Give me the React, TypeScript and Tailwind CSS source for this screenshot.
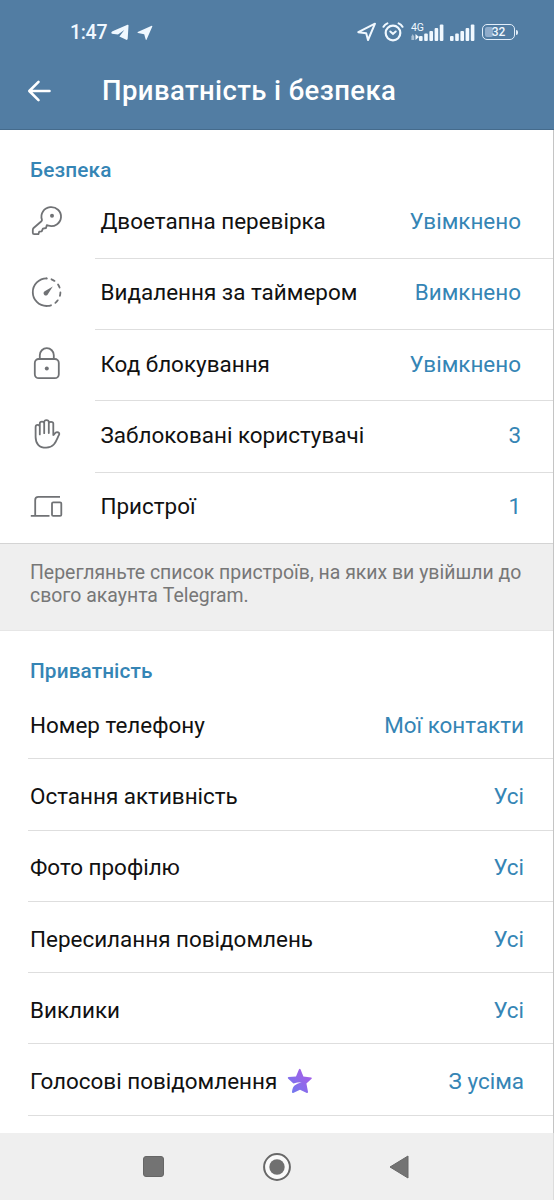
import React from "react";

const KeyIcon = () => (
  <svg width="34" height="34" viewBox="0 0 34 34" fill="none" stroke="#707275" strokeWidth="1.8" strokeLinejoin="round" strokeLinecap="round">
    <path d="M11.9 14.5A9.8 9.5 0 1 1 18.5 20.7L16.8 20.2L16 23L12.9 23.6L11.7 26.4L9.2 26.7L8.4 29.2H4.2Q2.8 29.2 2.8 27.8V25Q2.8 23.8 3.6 23L11.4 16.2Q12.2 15.5 11.9 14.5Z" />
    <circle cx="22" cy="10.8" r="2" fill="#707275" stroke="none" />
  </svg>
);

const TimerIcon = () => (
  <svg width="34" height="34" viewBox="0 0 34 34" fill="none" stroke="#707275" strokeWidth="1.8" strokeLinecap="round">
    <path d="M16.6 2.4A13.8 13.8 0 0 0 16.6 30" />
    <path d="M16.6 2.4A13.8 13.8 0 0 1 16.6 30" strokeDasharray="3.4 5" strokeDashoffset="-5" />
    <path d="M22.8 10.6L18 18A2.3 2.3 0 1 1 14.7 15.2Z" fill="#707275" stroke="none" />
  </svg>
);

const LockIcon = () => (
  <svg width="34" height="34" viewBox="0 0 34 34" fill="none" stroke="#707275" strokeWidth="1.8">
    <rect x="4.8" y="12" width="24" height="19.2" rx="4" />
    <path d="M9.8 12V8.2A7 7 0 0 1 23.8 8.2V12" />
    <circle cx="16.8" cy="21.4" r="2" fill="#707275" stroke="none" />
  </svg>
);

const HandIcon = () => (
  <svg width="34" height="34" viewBox="0 0 34 34" fill="none" stroke="#707275" strokeWidth="1.8" strokeLinecap="round" strokeLinejoin="round">
    <path d="M9.8 16.4V5.6Q9.8 3.7 12 3.7Q14.2 3.7 14.2 5.6V15.2M14.2 5.4V4.1Q14.2 2.1 16.4 2.1Q18.8 2.1 18.8 4.1V15M18.8 5.6Q18.8 3.8 21 3.8Q23.3 3.8 23.3 5.6V17C24.6 17 24.8 14.1 27 14.1Q29.8 14.4 29.2 16.6C26.5 20.9 25.5 29.6 16.2 29.7C9 29.7 5.6 25.4 5.6 19.1V9Q5.6 6.8 7.7 6.8Q9.8 6.8 9.8 9" />
  </svg>
);

const DevicesIcon = () => (
  <svg width="34" height="34" viewBox="0 0 34 34" fill="none" stroke="#707275" strokeWidth="1.8">
    <path d="M.8 25.9H19.5M5.2 25.5V10.1Q5.2 6.9 8.4 6.9H30" />
    <rect x="22" y="12.3" width="9.3" height="13.6" rx="1.2" />
  </svg>
);

const StarIcon = () => (
  <svg width="26" height="26" viewBox="0 0 26 26" className="ml-[10px] mb-[2px]">
    <defs>
      <linearGradient id="star" x1="0" y1="1" x2="1" y2="0">
        <stop offset="0" stopColor="#6b7cf0" />
        <stop offset="0.5" stopColor="#8f69ea" />
        <stop offset="1" stopColor="#b05be8" />
      </linearGradient>
    </defs>
    <path
      d="M13.6 1.4L16.4 8.6L24.2 9.4Q25.4 9.8 24.6 10.8L19.4 15.6L21 23.8Q21 25.4 19.8 24.9L13 21.8L6.2 25Q4.8 25.2 5 23.7Q5.6 18.8 7.6 17.4Q9.8 15.7 14.6 14.2Q10 14.2 6.4 15.6L1 10.6Q.3 9.4 1.6 9.1L9 8.5L11.9 1.5Q12.8.2 13.6 1.4Z"
      fill="url(#star)"
    />
  </svg>
);

const SignalBars = ({ className }: { className?: string }) => (
  <svg width="25" height="17" viewBox="0 0 25 17" fill="#f0f8ff" className={className}>
    <rect x="0" y="12" width="3.6" height="5" rx="1" />
    <rect x="5.2" y="9.5" width="3.6" height="7.5" rx="1" />
    <rect x="10.4" y="7" width="3.6" height="10" rx="1" />
    <rect x="15.6" y="4" width="3.6" height="13" rx="1" />
    <rect x="20.8" y="0.5" width="3.6" height="16.5" rx="1" />
  </svg>
);

const StatusBar = () => (
  <div className="flex items-center h-[65px] pl-[70px] pr-[36px] text-[#f0f8ff]">
    <span className="text-[19.5px] font-medium leading-none w-[41px] whitespace-nowrap tracking-[-0.3px]">1:47</span>
    <svg width="18" height="17" viewBox="0 0 18 17" fill="#f0f8ff">
      <path d="M.3 8.7Q.3 7.7 1.5 7.2L16.5.8Q17.7.5 17.5 1.8L16.7 14.8Q16.4 16.5 14.7 15.6L8.4 12.4L13.3 6L7 10.6L1 9.7Q.3 9.3.3 8.7Z" />
    </svg>
    <svg width="16" height="16" viewBox="0 0 16 16" fill="#f0f8ff" className="ml-[8px]">
      <path d="M.7 7L14.7.7Q15.5.6 15.3 1.4L9.5 14.8Q9 15.4 8.7 14.6L7.2 9.2L1 8Q.1 7.5.7 7Z" />
    </svg>
    <div className="ml-auto flex items-center">
      <svg width="20" height="20" viewBox="0 0 20 20" fill="none" stroke="#f0f8ff" strokeWidth="2" strokeLinejoin="round" className="mb-[1px]">
        <path d="M1.3 10.2L18 1.7L11 18L9.2 11.3Z" />
      </svg>
      <svg width="22" height="20" viewBox="0 0 22 20" fill="none" stroke="#f0f8ff" strokeWidth="2.2" strokeLinecap="round" className="ml-[5px] mb-[2px]">
        <circle cx="11" cy="11" r="7.3" />
        <path d="M1.5 4.8Q2.8 2.4 5.4 1.3M20.5 4.8Q19.2 2.4 16.6 1.3M8.3 9.5L11 12L13.7 9.5" strokeWidth="2" />
      </svg>
      <div className="ml-[7px] mb-[3px] flex items-end">
        <div className="flex flex-col w-[8px] h-[19px]">
          <span className="text-[10.5px] leading-[11px] whitespace-nowrap tracking-[-0.2px]">4G</span>
          <svg width="8" height="6" viewBox="0 0 8 6" className="mt-[1px]">
            <path d="M1.7 0L3.2 2.4V6H.4V2.4Z" fill="#a9c0d5" />
            <path d="M4.5 0V6L8 3Z" fill="#f0f8ff" />
          </svg>
        </div>
        <SignalBars />
        <SignalBars className="ml-[6px]" />
      </div>
      <div className="ml-[7px] mb-[1px] flex items-center">
        <div className="relative w-[33px] h-[16px] rounded-[5px] border-[1.5px] border-[#e2eefa] flex items-center justify-center">
          <div className="absolute left-[2px] top-[2px] w-[8px] h-[10px] rounded-[2px] bg-[#8faccb]" />
          <span className="relative text-[12px] leading-none font-medium">32</span>
        </div>
        <div className="w-[2px] h-[5px] ml-[1px] rounded-r bg-[#e2eefa]" />
      </div>
    </div>
  </div>
);

const security = [
  { icon: <KeyIcon />, label: "Двоетапна перевірка", value: "Увімкнено" },
  { icon: <TimerIcon />, label: "Видалення за таймером", value: "Вимкнено" },
  { icon: <LockIcon />, label: "Код блокування", value: "Увімкнено" },
  { icon: <HandIcon />, label: "Заблоковані користувачі", value: "3" },
  { icon: <DevicesIcon />, label: "Пристрої", value: "1" },
];

const privacy = [
  { label: "Номер телефону", value: "Мої контакти" },
  { label: "Остання активність", value: "Усі" },
  { label: "Фото профілю", value: "Усі" },
  { label: "Пересилання повідомлень", value: "Усі" },
  { label: "Виклики", value: "Усі" },
  { label: "Голосові повідомлення", value: "З усіма", premium: true },
];

const App = () => {
  return (
    <div className="w-[554px] h-[1200px] flex flex-col overflow-hidden bg-white font-[Roboto,sans-serif] text-[22.45px] text-[#111111]">
      <header className="h-[130px] shrink-0 bg-[#527da3] border-b border-[#456b8c]">
        <StatusBar />
        <div className="flex items-center h-[52px] pl-[27px]">
          <svg width="25" height="24" viewBox="0 0 25 24" fill="none" stroke="#ffffff" strokeWidth="2.6" strokeLinecap="round" strokeLinejoin="round">
            <path d="M11.5 2.8L2.3 12L11.5 21.2M2.8 12H22.5" />
          </svg>
          <h1 className="ml-[50px] text-[27.5px] tracking-[0.4px] font-medium text-white whitespace-nowrap">Приватність і безпека</h1>
        </div>
      </header>

      <main className="flex-1 flex flex-col border-r border-[#c4c4c4] overflow-hidden">
        <section className="h-[413px] shrink-0">
          <h2 className="h-[57.5px] pl-[30px] pt-[26px] text-[20.8px] tracking-[0.15px] leading-[28px] font-medium text-[#3585b5]">Безпека</h2>
          {security.map((row) => (
            <div key={row.label} className="group flex h-[71.25px]">
              <div className="w-[95px] pl-[30px] pt-[17px]">{row.icon}</div>
              <div className="flex-1 flex items-center justify-between pl-[5.5px] pr-[32px] pb-[1.5px] border-b border-[#dedede] group-last:border-transparent">
                <span>{row.label}</span>
                <span className="text-[#3585b5]">{row.value}</span>
              </div>
            </div>
          ))}
        </section>

        <p className="h-[88px] shrink-0 pl-[30px] pt-[17px] border-t border-b border-t-[#d4d4d4] border-b-[#e6e6e6] bg-[#efefef] text-[19.45px] leading-[23px] text-[#777777] whitespace-nowrap">
          Перегляньте список пристроїв, на яких ви увійшли до
          <br />
          свого акаунта Telegram.
        </p>

        <section className="flex-1">
          <h2 className="h-[57px] pl-[30px] pt-[26px] text-[20.8px] tracking-[0.1px] leading-[28px] font-medium text-[#3585b5]">Приватність</h2>
          {privacy.map((row) => (
            <div key={row.label} className="flex items-center justify-between h-[71.25px] ml-[28px] pl-[2px] pr-[29px] pt-[5px] border-b border-[#dedede]">
              <span className="flex items-center">
                {row.label}
                {row.premium && <StarIcon />}
              </span>
              <span className="text-[#3585b5]">{row.value}</span>
            </div>
          ))}
        </section>
      </main>

      <nav className="h-[67px] shrink-0 flex items-center bg-[#efefef] border-r border-[#dcdcdc]">
        <div className="ml-[143px] w-[21px] h-[21px] rounded-[3px] bg-[#737373] border border-[#666666]" />
        <svg width="28" height="28" viewBox="0 0 28 28" className="ml-[99px]">
          <circle cx="14" cy="14" r="12.9" fill="#fafafa" stroke="#686868" strokeWidth="2" />
          <circle cx="14" cy="14" r="7.7" fill="#707070" />
        </svg>
        <svg width="20" height="24" viewBox="0 0 20 24" className="ml-[98px]">
          <path d="M1 12L19 1V23Z" fill="#737373" stroke="#686868" strokeWidth="1" strokeLinejoin="round" />
        </svg>
      </nav>
    </div>
  );
};

export default App;
